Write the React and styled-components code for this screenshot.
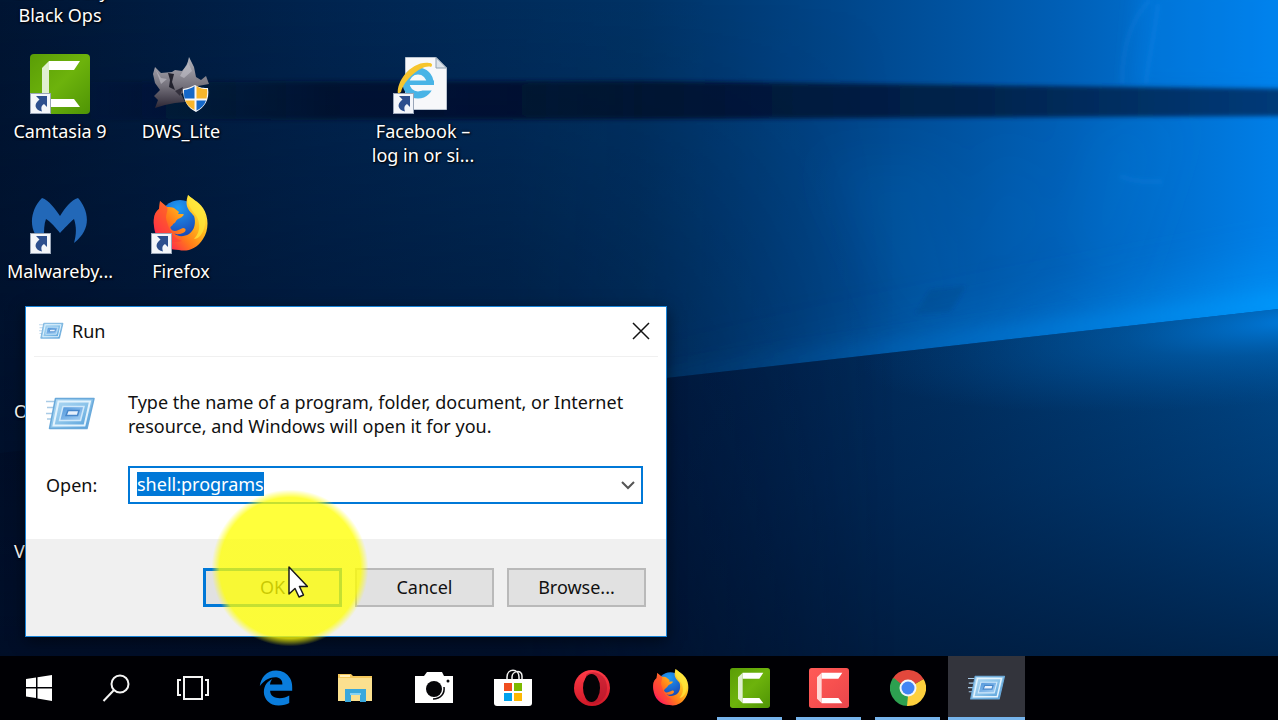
import React, { useEffect, useRef } from "react";
import styled, { createGlobalStyle, css } from "styled-components";
import { FaEdgeLegacy } from "react-icons/fa6";

/* ---------- drawings ---------- */

const Wallpaper = () => (
  <WallpaperSvg viewBox="0 0 1278 656" preserveAspectRatio="none" aria-hidden="true">
    <defs>
      <linearGradient id="sky" x1="0" x2="1" y1="0" y2="0">
        <stop offset="0" stopColor="#001533" />
        <stop offset="0.25" stopColor="#00244f" />
        <stop offset="0.5" stopColor="#003264" />
        <stop offset="0.66" stopColor="#00468a" />
        <stop offset="0.83" stopColor="#005fb6" />
        <stop offset="1" stopColor="#007fe8" />
      </linearGradient>
      <linearGradient id="dim" x1="0" x2="0" y1="0" y2="1">
        <stop offset="0" stopColor="#000c24" stopOpacity="0" />
        <stop offset="1" stopColor="#000c24" stopOpacity="0.75" />
      </linearGradient>
      <linearGradient id="dimFade" x1="0" x2="1" y1="0" y2="0">
        <stop offset="0" stopColor="#fff" />
        <stop offset="0.4" stopColor="#fff" />
        <stop offset="0.7" stopColor="#000" />
      </linearGradient>
      <mask id="dimMask">
        <rect width="1278" height="656" fill="url(#dimFade)" />
      </mask>
      <linearGradient id="bar" x1="0" x2="1" y1="0" y2="0">
        <stop offset="0.05" stopColor="#00122c" stopOpacity="0" />
        <stop offset="0.25" stopColor="#00122d" stopOpacity="0.8" />
        <stop offset="0.5" stopColor="#001434" />
        <stop offset="0.75" stopColor="#00234c" />
        <stop offset="1" stopColor="#003c7c" />
      </linearGradient>
      <linearGradient id="floor" x1="0" x2="1" y1="0" y2="0">
        <stop offset="0" stopColor="#000d24" />
        <stop offset="0.5" stopColor="#001c44" />
        <stop offset="0.75" stopColor="#003062" />
        <stop offset="1" stopColor="#004a8c" />
      </linearGradient>
      <linearGradient id="floorDim" x1="0" x2="0" y1="0" y2="1">
        <stop offset="0" stopColor="#001a40" stopOpacity="0" />
        <stop offset="0.5" stopColor="#001a40" stopOpacity="0.3" />
        <stop offset="1" stopColor="#001838" stopOpacity="0.75" />
      </linearGradient>
      <radialGradient id="glow">
        <stop offset="0" stopColor="#0086f0" stopOpacity="0.8" />
        <stop offset="0.4" stopColor="#006fc8" stopOpacity="0.4" />
        <stop offset="1" stopColor="#005eb0" stopOpacity="0" />
      </radialGradient>
      <linearGradient id="beam" x1="0" x2="1" y1="0" y2="0">
        <stop offset="0" stopColor="#0c5ba6" stopOpacity="0.2" />
        <stop offset="0.5" stopColor="#0c7fe0" stopOpacity="0.55" />
        <stop offset="1" stopColor="#009cff" />
      </linearGradient>
      <clipPath id="above">
        <path d="M0 453 L1278 309 V0 H0Z" />
      </clipPath>
      <clipPath id="below">
        <path d="M0 453 L1278 309 V656 H0Z" />
      </clipPath>
      <filter id="haze" x="-50%" y="-80%" width="200%" height="260%">
        <feGaussianBlur stdDeviation="24" />
      </filter>
      <filter id="soft" x="-20%" y="-60%" width="140%" height="220%">
        <feGaussianBlur stdDeviation="10" />
      </filter>
      <filter id="edge">
        <feGaussianBlur stdDeviation="2" />
      </filter>
    </defs>
    <rect width="1278" height="656" fill="url(#sky)" />
    <g filter="url(#haze)" fill="#2a9bff" fillOpacity="0.07">
      <path d="M1005 140 L1040 200 L1020 300 L980 240Z" />
      <path d="M1090 118 L1060 240 L1120 300 L1180 118Z" />
      <path d="M820 160 L900 330 L990 330 L940 160Z" />
    </g>
    <path d="M1140 -20 H1320 V90 H1130Z" fill="#008cff" fillOpacity="0.25" filter="url(#soft)" />
    <path
      d="M1150 0 C1130 20 1122 50 1122 84 M1158 4 C1154 40 1148 60 1146 84 M1120 176 C1140 184 1150 180 1162 182"
      fill="none"
      stroke="#3aa0ff"
      strokeOpacity="0.1"
      strokeWidth="5"
      filter="url(#edge)"
    />
    <path d="M930 290 L966 286 L950 312 L915 314Z" fill="#003a78" fillOpacity="0.25" filter="url(#edge)" />
    <g clipPath="url(#above)">
      <path d="M640 400 L1300 322 V262 L640 374Z" fill="url(#beam)" fillOpacity="0.6" filter="url(#haze)" />
      <path d="M640 386 L1300 312 V292 L640 376Z" fill="url(#beam)" filter="url(#soft)" />
    </g>
    <path d="M0 82 L640 81 L1300 89 V116 L640 119 L0 120Z" fill="url(#bar)" filter="url(#edge)" />
    <path d="M0 453 L1278 309 V656 H0Z" fill="url(#floor)" />
    <path d="M0 453 L1278 309 V656 H0Z" fill="url(#floorDim)" />
    <g clipPath="url(#below)">
      <ellipse cx="1300" cy="320" rx="440" ry="80" fill="url(#glow)" transform="rotate(-6 1300 320)" />
    </g>
    <rect width="1278" height="656" fill="url(#dim)" mask="url(#dimMask)" />
  </WallpaperSvg>
);

const ShortcutArrow = () => (
  <g>
    <rect x="0.5" y="39.5" width="20" height="20" fill="#f4f6fa" stroke="#9aa6b8" />
    <path
      d="M6 42 H17 V53 L14 50 C11 52 11 54 12 57.500 C5 56 3 50.500 9.500 45.500Z"
      fill="#2d4f8e"
    />
  </g>
);

const CamtasiaMark = ({ red }) => {
  const id = red ? "camRed" : "camGreen";
  return (
    <g>
      <defs>
        <linearGradient id={id} x1="0" x2="1" y1="0" y2="1">
          <stop offset="0" stopColor={red ? "#ff5b58" : "#5a9d06"} />
          <stop offset="0.5" stopColor={red ? "#f7504f" : "#6db30c"} />
          <stop offset="1" stopColor={red ? "#e8464c" : "#4f9405"} />
        </linearGradient>
      </defs>
      <rect width="60" height="60" rx="4" fill={`url(#${id})`} />
      <path d="M12 14 L19 7 V53 L12 46Z" fill={red ? "#ffd9d6" : "#e0efd0"} />
      <path d="M19 7 H50 L44 16 H19Z M19 45 H44 L50 53 H19Z" fill="#fff" />
    </g>
  );
};

const FirefoxMark = ({ id }) => (
  <g>
    <defs>
      <linearGradient id={`${id}Fire`} x1="0.9" x2="0.1" y1="0.1" y2="0.8">
        <stop offset="0" stopColor="#fff44f" />
        <stop offset="0.35" stopColor="#ffb81c" />
        <stop offset="0.65" stopColor="#ff7a1a" />
        <stop offset="1" stopColor="#ff1d55" />
      </linearGradient>
      <radialGradient id={`${id}Globe`} cx="0.45" cy="0.2" r="0.8">
        <stop offset="0" stopColor="#1c9bf5" />
        <stop offset="1" stopColor="#1a3fae" />
      </radialGradient>
    </defs>
    <circle cx="28" cy="25" r="20" fill={`url(#${id}Globe)`} />
    <path
      d="M36 0 C40 4 46 6 51 13 C57 22 57 35 51 44 C45 54 35 57 27 55 C12 55 3 44 2 31 C1 22 3 17 7 14 L8 6 L15 12 C18 12 20 12 22 13 L27 17 L26 19 H31 C33 19 31 22 26 24 C23 26 24 28 21 29 C21 31 17 31 19 34 C22 38 26 35 31 33 C34 33 35 36 31 38 C26 40 23 39 22 38 C25 42 32 42 37 39 C43 35 44 27 42 21 C37 15 32 12 36 0Z"
      fill={`url(#${id}Fire)`}
    />
    <path d="M2 31 C1 22 3 17 7 14 L8 6 L15 12 C17 16 12 20 15 27 C18 38 23 44 30 46 C20 49 7 46 2 31Z" fill="#ff3c3c" fillOpacity="0.55" />
    <path d="M36 0 C44 6 55 16 53 30 C51 40 46 44 42 44 C50 36 48 24 42 18 C38 13 35 8 36 0Z" fill="#ffe93b" fillOpacity="0.7" />
  </g>
);

const RunMark = ({ id }) => (
  <g>
    <defs>
      <linearGradient id={id} x1="0" x2="1" y1="0" y2="1">
        <stop offset="0" stopColor="#b4dcf5" />
        <stop offset="0.5" stopColor="#8cc4ea" />
        <stop offset="1" stopColor="#4d9ad8" />
      </linearGradient>
      <linearGradient id={`${id}Core`} x1="0" x2="1" y1="0" y2="1">
        <stop offset="0" stopColor="#4c93da" />
        <stop offset="1" stopColor="#a8d2f4" />
      </linearGradient>
    </defs>
    <path d="M0 5.500 H9 M1 11.500 H8 M0 17.500 H7 M1 23 H6" stroke="#a9cbe6" strokeWidth="1.500" />
    <path d="M9.500 2.500 H48 L41 32.500 H3.500Z" fill={`url(#${id})`} stroke="#6aa9da" strokeWidth="1.500" strokeLinejoin="round" />
    <path d="M12.500 5.500 H44 L38.500 29.500 H7.500Z" fill="none" stroke="#e3f3fd" strokeWidth="2" />
    <path d="M17 10.500 H38 L34.500 24.500 H13.500Z" fill={`url(#${id}Core)`} stroke="#cfe8fa" strokeWidth="1.500" />
    <path d="M22 14.500 H33 L31.500 19.500 H20Z" fill="#e6f0fc" stroke="#4787cb" strokeWidth="1.500" />
  </g>
);

const CamtasiaShortcut = () => (
  <TileSvg viewBox="0 0 60 60">
    <CamtasiaMark />
    <ShortcutArrow />
  </TileSvg>
);

const DwsShortcut = () => (
  <TileSvg viewBox="0 0 60 60">
    <defs>
      <linearGradient id="wolf" x1="0" x2="0" y1="0" y2="1">
        <stop offset="0" stopColor="#b4b4bd" />
        <stop offset="0.55" stopColor="#77747e" />
        <stop offset="1" stopColor="#2c2634" />
      </linearGradient>
    </defs>
    <path
      d="M4 13 L10 19 L21 18 L24 16 L31 17 L36 11 L38 3 L43 13 L45 23 L50 26 L55 22 L58 30 L47 32 L36 37 L30 40 L34 48 L24 49 L14 51 L4 54 L7 46 L3 42 L9 36 L4 29 L2 20Z"
      fill="url(#wolf)"
    />
    <path d="M17 19 L19 26 L18 33 L24 36 L21 28 L23 20Z" fill="#22222e" />
    <path d="M24 37 L32 33 L29 42Z" fill="#33303c" />
    <path d="M5 16 L10 24 L16 25 L10 30Z M37 8 L41 17 L33 24 L29 22Z" fill="#c3c2c9" fillOpacity="0.6" />
    <path d="M44 31 C49 34 53 34 57 34 C59 46 53 54 45 58 C37 54 32 47 32 35 C37 34 40 33 44 31Z" fill="#f6f7f9" />
    <path d="M43.500 32 V44.500 H33.500 C33 41 33 38 33 36 C37 35.500 41 34 43.500 32Z" fill="#1467c8" />
    <path d="M45.500 32 C49 34.500 52 35 56 35 C56.500 38 56 41 55.500 44.500 H45.500Z" fill="#f7b52b" />
    <path d="M34 46.500 H43.500 V56 C38.500 53.500 35.500 50 34 46.500Z" fill="#f7b52b" />
    <path d="M45.500 46.500 H55 C53.500 51 50 54.500 45.500 56.500Z" fill="#1467c8" />
  </TileSvg>
);

const FacebookShortcut = () => (
  <TileSvg viewBox="0 0 60 60">
    <path d="M12.500 3.500 H43 L53.500 14 V55.500 H12.500Z" fill="#f7f8fa" stroke="#b9c3cf" />
    <path d="M43 3.500 V14 H53.500Z" fill="#dce3ea" stroke="#8fa0b0" />
    <circle cx="25" cy="29" r="12" fill="none" stroke="#49b4e6" strokeWidth="7" />
    <path d="M25 31 H44 L41 36.500 H25Z" fill="#f7f8fa" />
    <path d="M15 26.500 H41 V31 H15Z" fill="#49b4e6" />
    <path d="M5 40 C3 28 18 7 36 9 C39 9 40 11 38 13 C30 10 12 24 8 38Z" fill="#f6c52d" />
    <ShortcutArrow />
  </TileSvg>
);

const MalwarebytesShortcut = () => (
  <TileSvg viewBox="0 0 60 60">
    <path
      d="M12 4 C19 6 25 15 30 22 C35 14 41 6 48 4 C57 14 64 34 44 49 C46 42 47 34 44 25 C40 28 34 35 30 39 C26 34 21 28 16 25 C14 30 14 36 14 44 L5 40 C-1 29 2 14 12 4Z"
      fill="#2268b8"
    />
    <ShortcutArrow />
  </TileSvg>
);

const FirefoxShortcut = () => (
  <TileSvg viewBox="0 0 60 60">
    <g transform="translate(1 1)">
      <FirefoxMark id="ffDesk" />
    </g>
    <ShortcutArrow />
  </TileSvg>
);

const StartIcon = () => (
  <svg width="26" height="26" viewBox="0 0 26 26">
    <path d="M0 4 L10 2.500 V12 H0Z M11.500 2.300 L26 0 V12 H11.500Z M0 13.500 H10 V23 L0 21.500Z M11.500 13.500 H26 V26 L11.500 23.500Z" fill="#fff" />
  </svg>
);

const SearchIcon = () => (
  <svg width="28" height="28" viewBox="0 0 28 28" fill="none" stroke="#f4f4f4" strokeWidth="2">
    <circle cx="18" cy="10" r="8.500" />
    <path d="M12 16 L1.500 27" />
  </svg>
);

const TaskViewIcon = () => (
  <svg width="34" height="26" viewBox="0 0 34 26" fill="none" stroke="#f4f4f4" strokeWidth="2">
    <path d="M8 2 H26 V24 H8Z M5 5 H2 V20 H5 M29 5 H32 V20 H29" />
  </svg>
);

const FolderIcon = () => (
  <svg width="36" height="32" viewBox="0 0 36 32">
    <path d="M1 2 H14 L16 4 H35 V29 H1Z" fill="#f5c85c" />
    <path d="M1 6 H35 V29 H1Z" fill="#fbe08f" />
    <path d="M3 3 H13 V5 H3Z" fill="#fff0bd" />
    <path d="M8 17 H29 V30 H23 V23 H14 V30 H8Z" fill="#3aa8dc" />
    <path d="M13 21 H24 V23 H13Z" fill="#86d2f2" />
  </svg>
);

const CameraIcon = () => (
  <svg width="40" height="32" viewBox="0 0 40 32">
    <path d="M1 4 H10 L13 0 H28 L30 4 H39 V31 H1Z" fill="#fff" />
    <circle cx="20" cy="17" r="8" fill="#050508" />
    <path d="M30 15 C31 21 27 27 19 27" fill="none" stroke="#050508" strokeWidth="1.500" />
    <circle cx="34" cy="9" r="1.500" fill="#050508" />
  </svg>
);

const StoreIcon = () => (
  <svg width="38" height="38" viewBox="0 0 38 38">
    <path d="M13 12 V8 C13 -1 25 -1 25 8 V12 M18 12 V8 C18 2 28 0 28 7 V12" fill="none" stroke="#f2f2f2" strokeWidth="1.500" />
    <path d="M0 10 H38 V34 Q38 37 35 37 H3 Q0 37 0 34Z" fill="#fff" />
    <rect x="10" y="14" width="8" height="8" fill="#f04e1f" />
    <rect x="20" y="14" width="8" height="8" fill="#7db900" />
    <rect x="10" y="24" width="8" height="8" fill="#00a2ee" />
    <rect x="20" y="24" width="8" height="8" fill="#fdb803" />
  </svg>
);

const OperaIcon = () => (
  <svg width="36" height="36" viewBox="0 0 36 36">
    <defs>
      <linearGradient id="opera" x1="0" x2="0" y1="0" y2="1">
        <stop offset="0" stopColor="#ff3b47" />
        <stop offset="1" stopColor="#d01827" />
      </linearGradient>
    </defs>
    <circle cx="18" cy="18" r="18" fill="url(#opera)" />
    <path d="M12 5 C18 -1 33 3 33 18 C33 33 18 37 12 31Z" fill="#a8142a" fillOpacity="0.5" />
    <ellipse cx="17.500" cy="18" rx="8.500" ry="14" fill="#030306" />
  </svg>
);

const ChromeIcon = () => (
  <svg width="36" height="36" viewBox="0 0 36 36">
    <path d="M18 18 L2.400 9 A18 18 0 0 1 33.600 9Z" fill="#e2483c" />
    <path d="M18 18 L33.600 9 A18 18 0 0 1 18 36Z" fill="#fdd03d" />
    <path d="M18 18 L18 36 A18 18 0 0 1 2.400 9Z" fill="#2da050" />
    <path d="M18 9.500 H33.900 L33.600 9 L18 9Z" fill="#e2483c" />
    <path d="M25.400 22.200 L18 36 H17 L18 26Z" fill="#fdd03d" />
    <path d="M10.600 22.200 L2.400 9 L4 8 L11 14Z" fill="#2da050" />
    <circle cx="18" cy="18" r="8.500" fill="#f3f5f8" />
    <circle cx="18" cy="18" r="6.500" fill="#4285f4" />
  </svg>
);

const Cursor = () => (
  <CursorSvg viewBox="0 0 20 32">
    <path
      d="M1 1 V28 L7 22.500 L11 31 L15.500 29 L11.500 20.500 H19.500Z"
      fill="#fff"
      stroke="#1a1a1a"
      strokeWidth="1.500"
      strokeLinejoin="round"
    />
  </CursorSvg>
);

/* ---------- data ---------- */

const shortcuts = [
  { label: "Call of Duty Black Ops", col: 1, row: 1 },
  { label: "Camtasia 9", col: 1, row: 2, icon: <CamtasiaShortcut /> },
  { label: "DWS_Lite", col: 2, row: 2, icon: <DwsShortcut /> },
  { label: "Facebook – log in or si...", col: 4, row: 2, icon: <FacebookShortcut /> },
  { label: "Malwareby...", col: 1, row: 3, icon: <MalwarebytesShortcut /> },
  { label: "Firefox", col: 2, row: 3, icon: <FirefoxShortcut /> },
  { label: "O", col: 1, row: 4, start: true },
  { label: "V", col: 1, row: 5, start: true },
];

const systemButtons = [
  { name: "Start", icon: <StartIcon /> },
  { name: "Search", icon: <SearchIcon /> },
  { name: "Task View", icon: <TaskViewIcon /> },
];

const apps = [
  { name: "Edge", icon: <FaEdgeLegacy size={36} color="#0a7ddd" /> },
  { name: "File Explorer", icon: <FolderIcon /> },
  { name: "Camera", icon: <CameraIcon /> },
  { name: "Store", icon: <StoreIcon /> },
  { name: "Opera", icon: <OperaIcon /> },
  {
    name: "Firefox",
    icon: (
      <svg width="38" height="38" viewBox="0 0 58 58">
        <FirefoxMark id="ffBar" />
      </svg>
    ),
  },
  {
    name: "Camtasia",
    running: true,
    icon: (
      <svg width="40" height="40" viewBox="0 0 60 60">
        <CamtasiaMark />
      </svg>
    ),
  },
  {
    name: "Camtasia Recorder",
    running: true,
    icon: (
      <svg width="40" height="40" viewBox="0 0 60 60">
        <CamtasiaMark red />
      </svg>
    ),
  },
  { name: "Chrome", running: true, icon: <ChromeIcon /> },
  {
    name: "Run",
    running: true,
    active: true,
    icon: (
      <svg width="38" height="28" viewBox="0 0 50 36">
        <RunMark id="runBar" />
      </svg>
    ),
  },
];

/* ---------- parts ---------- */

const RunDialog = () => {
  const field = useRef();

  useEffect(() => {
    field.current.focus();
    field.current.select();
  }, []);

  return (
    <Dialog role="dialog" aria-labelledby="run-title">
      <TitleBar>
        <svg width="25" height="18" viewBox="0 0 50 36" aria-hidden="true">
          <RunMark id="runTitle" />
        </svg>
        <Title id="run-title">Run</Title>
        <CloseButton aria-label="Close">
          <svg width="18" height="18" viewBox="0 0 18 18" stroke="#111" strokeWidth="1.500">
            <path d="M1 1 L17 17 M17 1 L1 17" />
          </svg>
        </CloseButton>
      </TitleBar>
      <DialogBody>
        <svg width="50" height="36" viewBox="0 0 50 36" aria-hidden="true">
          <RunMark id="runBody" />
        </svg>
        <Message>
          Type the name of a program, folder, document, or Internet resource, and
          Windows will open it for you.
        </Message>
        <label htmlFor="open">Open:</label>
        <Combo>
          <ComboInput id="open" ref={field} defaultValue="shell:programs" spellCheck={false} />
          <ComboArrow aria-label="Show history">
            <svg width="14" height="9" viewBox="0 0 14 9" fill="none" stroke="#555" strokeWidth="2">
              <path d="M1 1 L7 7 L13 1" />
            </svg>
          </ComboArrow>
        </Combo>
      </DialogBody>
      <DialogFooter>
        <DialogButton $primary>OK</DialogButton>
        <DialogButton>Cancel</DialogButton>
        <DialogButton>Browse...</DialogButton>
      </DialogFooter>
    </Dialog>
  );
};

const App = () => {
  return (
    <Screen>
      <GlobalStyle />
      <Desktop>
        <Wallpaper />
        <IconGrid>
          {shortcuts.map((s) => (
            <Shortcut key={s.label} $col={s.col} $row={s.row}>
              <IconBox>{s.icon}</IconBox>
              <ShortcutLabel $start={s.start}>{s.label}</ShortcutLabel>
            </Shortcut>
          ))}
        </IconGrid>
        <RunDialog />
        <Spotlight />
        <Cursor />
      </Desktop>
      <Taskbar>
        <TaskGroup>
          {systemButtons.map((b) => (
            <TaskButton key={b.name} aria-label={b.name}>
              {b.icon}
            </TaskButton>
          ))}
        </TaskGroup>
        <TaskGroup $gap={2}>
          {apps.map((a) => (
            <TaskButton key={a.name} aria-label={a.name} $running={a.running} $active={a.active}>
              {a.icon}
            </TaskButton>
          ))}
        </TaskGroup>
      </Taskbar>
    </Screen>
  );
};

/* ---------- styles ---------- */

const GlobalStyle = createGlobalStyle`
  * {
    box-sizing: border-box;
  }
  body {
    margin: 0;
    font-family: "Noto Sans", "Open Sans", sans-serif;
    font-size: 18px;
    line-height: 24px;
  }
  button, input {
    font: inherit;
  }
  svg {
    display: block;
  }
`;

const Screen = styled.div`
  display: flex;
  flex-direction: column;
  height: 100vh;
  overflow: hidden;
`;

const Desktop = styled.main`
  position: relative;
  flex: 1;
  min-height: 0;
  overflow: hidden;
  background: #001734;
`;

const WallpaperSvg = styled.svg`
  position: absolute;
  inset: 0;
  width: 100%;
  height: 100%;
`;

const IconGrid = styled.div`
  position: relative;
  display: grid;
  grid-template-columns: repeat(4, 120px);
  grid-auto-rows: 140px;
  column-gap: 1px;
  /* the first row is scrolled out above the screen */
  margin-top: -86px;
`;

const Shortcut = styled.div`
  grid-column: ${(p) => p.$col};
  grid-row: ${(p) => p.$row};
  display: flex;
  flex-direction: column;
  align-items: center;
  gap: 5px;
`;

const IconBox = styled.div`
  width: 60px;
  height: 60px;
`;

const TileSvg = styled.svg`
  width: 60px;
  height: 60px;
`;

const ShortcutLabel = styled.span`
  width: 120px;
  padding: 0 ${(p) => (p.$start ? "14px" : "4px")};
  color: #fff;
  text-align: ${(p) => (p.$start ? "left" : "center")};
  text-shadow: 1px 1px 2px #000, 0 0 3px rgba(0, 0, 0, 0.8);
`;

const Dialog = styled.section`
  position: absolute;
  left: 25px;
  top: 306px;
  width: 642px;
  border: 1px solid #1883d7;
  background: #fff;
  color: #111;
  box-shadow: 0 4px 14px rgba(0, 0, 0, 0.5);
`;

const TitleBar = styled.header`
  display: flex;
  align-items: center;
  gap: 8px;
  height: 50px;
  margin: 0 8px;
  padding: 0 8px 2px 5px;
  border-bottom: 1px solid #f0f0f0;
`;

const Title = styled.h1`
  flex: 1;
  margin: 0;
  font-size: 18px;
  font-weight: 400;
`;

const CloseButton = styled.button`
  padding: 0;
  border: 0;
  background: none;
`;

const DialogBody = styled.div`
  display: grid;
  grid-template-columns: 82px 1fr;
  align-items: center;
  row-gap: 28px;
  padding: 33px 23px 35px 20px;
`;

const Message = styled.p`
  margin: 0;
`;

const Combo = styled.div`
  display: flex;
  align-items: center;
  height: 38px;
  border: 2px solid #0078d7;
`;

const ComboInput = styled.input`
  flex: 1;
  min-width: 0;
  padding: 0 0 2px 7px;
  border: 0;
  outline: 0;
  background: none;
  color: #111;

  &::selection {
    background: #0078d7;
    color: #fff;
  }
`;

const ComboArrow = styled.button`
  padding: 0 6px;
  border: 0;
  background: none;
`;

const DialogFooter = styled.footer`
  display: flex;
  justify-content: flex-end;
  gap: 13px;
  padding: 29px 20px;
  background: #f0f0f0;
`;

const DialogButton = styled.button`
  width: 139px;
  height: 39px;
  padding: 0 0 2px;
  border: 2px solid #b9b9b9;
  background: #e1e1e1;
  color: #111;

  ${(p) =>
    p.$primary &&
    css`
      border: 3px solid #0078d7;
    `}
`;

const Spotlight = styled.div`
  position: absolute;
  left: 210px;
  top: 488px;
  width: 160px;
  height: 160px;
  border-radius: 50%;
  background: radial-gradient(
    closest-side,
    rgba(255, 255, 0, 0.77) 88%,
    rgba(255, 255, 0, 0) 98%
  );
  pointer-events: none;
`;

const CursorSvg = styled.svg`
  position: absolute;
  left: 288px;
  top: 566px;
  width: 20px;
  height: 32px;
`;

const Taskbar = styled.nav`
  display: flex;
  gap: 6px;
  height: 64px;
  background: #000004;
`;

const TaskGroup = styled.div`
  display: flex;
  gap: ${(p) => p.$gap || 0}px;
`;

const TaskButton = styled.button`
  position: relative;
  display: flex;
  align-items: center;
  justify-content: center;
  width: 77px;
  height: 64px;
  padding: 0;
  border: 0;
  background: ${(p) => (p.$active ? "#33343c" : "none")};

  ${(p) =>
    p.$running &&
    css`
      &::after {
        content: "";
        position: absolute;
        right: ${p.$active ? 0 : 6}px;
        bottom: 0;
        left: ${p.$active ? 0 : 6}px;
        height: 3px;
        background: #76b4ec;
      }
    `}
`;

export default App;
